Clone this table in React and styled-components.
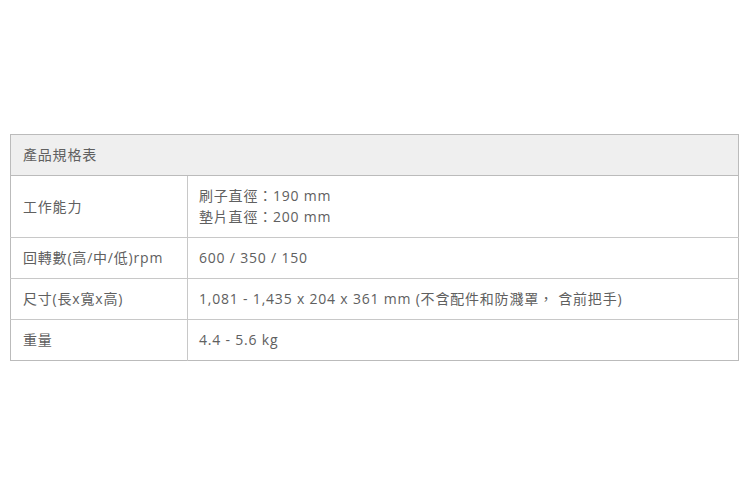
import React from 'react';
import styled, { createGlobalStyle } from 'styled-components';

const GlobalStyle = createGlobalStyle`
  html, body {
    margin: 0;
    padding: 0;
    background: #fff;
  }
  body {
    font-family: "Open Sans", "Noto Sans CJK TC", sans-serif;
  }
`;

const Page = styled.div`
  width: 750px;
  height: 500px;
  box-sizing: border-box;
  padding: 134px 11px 0 10px;
`;

const SpecTable = styled.table`
  width: 100%;
  border-collapse: collapse;
  border: 1px solid #bbb;
  font-size: 14px;
  line-height: 21px;
  letter-spacing: 0.8px;
  color: #606060;
`;

const HeadCell = styled.th`
  background: #efefef;
  text-align: left;
  font-weight: normal;
  padding: 9px 12px 10px;
  border-bottom: 1px solid #bbb;
`;

const Row = styled.tr`
  & + & td {
    border-top: 1px solid #c8c8c8;
  }
`;

const Label = styled.td`
  width: 152px;
  padding: 9px 12px 10px;
  border-right: 1px solid #c8c8c8;
  vertical-align: middle;
  white-space: nowrap;
`;

const Value = styled.td`
  padding: 9px 12px 10px 11px;
  vertical-align: middle;
`;

const specs = [
  { label: '工作能力', value: ['刷子直徑：190 mm', '墊片直徑：200 mm'] },
  { label: '回轉數(高/中/低)rpm', value: ['600 / 350 / 150'] },
  { label: '尺寸(長x寬x高)', value: ['1,081 - 1,435 x 204 x 361 mm (不含配件和防濺罩， 含前把手)'] },
  { label: '重量', value: ['4.4 - 5.6 kg'] },
];

const App = () => {
  return (
    <>
      <GlobalStyle />
      <Page>
        <SpecTable>
          <thead>
            <tr>
              <HeadCell colSpan={2}>產品規格表</HeadCell>
            </tr>
          </thead>
          <tbody>
            {specs.map((s) => (
              <Row key={s.label}>
                <Label>{s.label}</Label>
                <Value>
                  {s.value.map((line, i) => (
                    <div key={i}>{line}</div>
                  ))}
                </Value>
              </Row>
            ))}
          </tbody>
        </SpecTable>
      </Page>
    </>
  );
};

export default App;
